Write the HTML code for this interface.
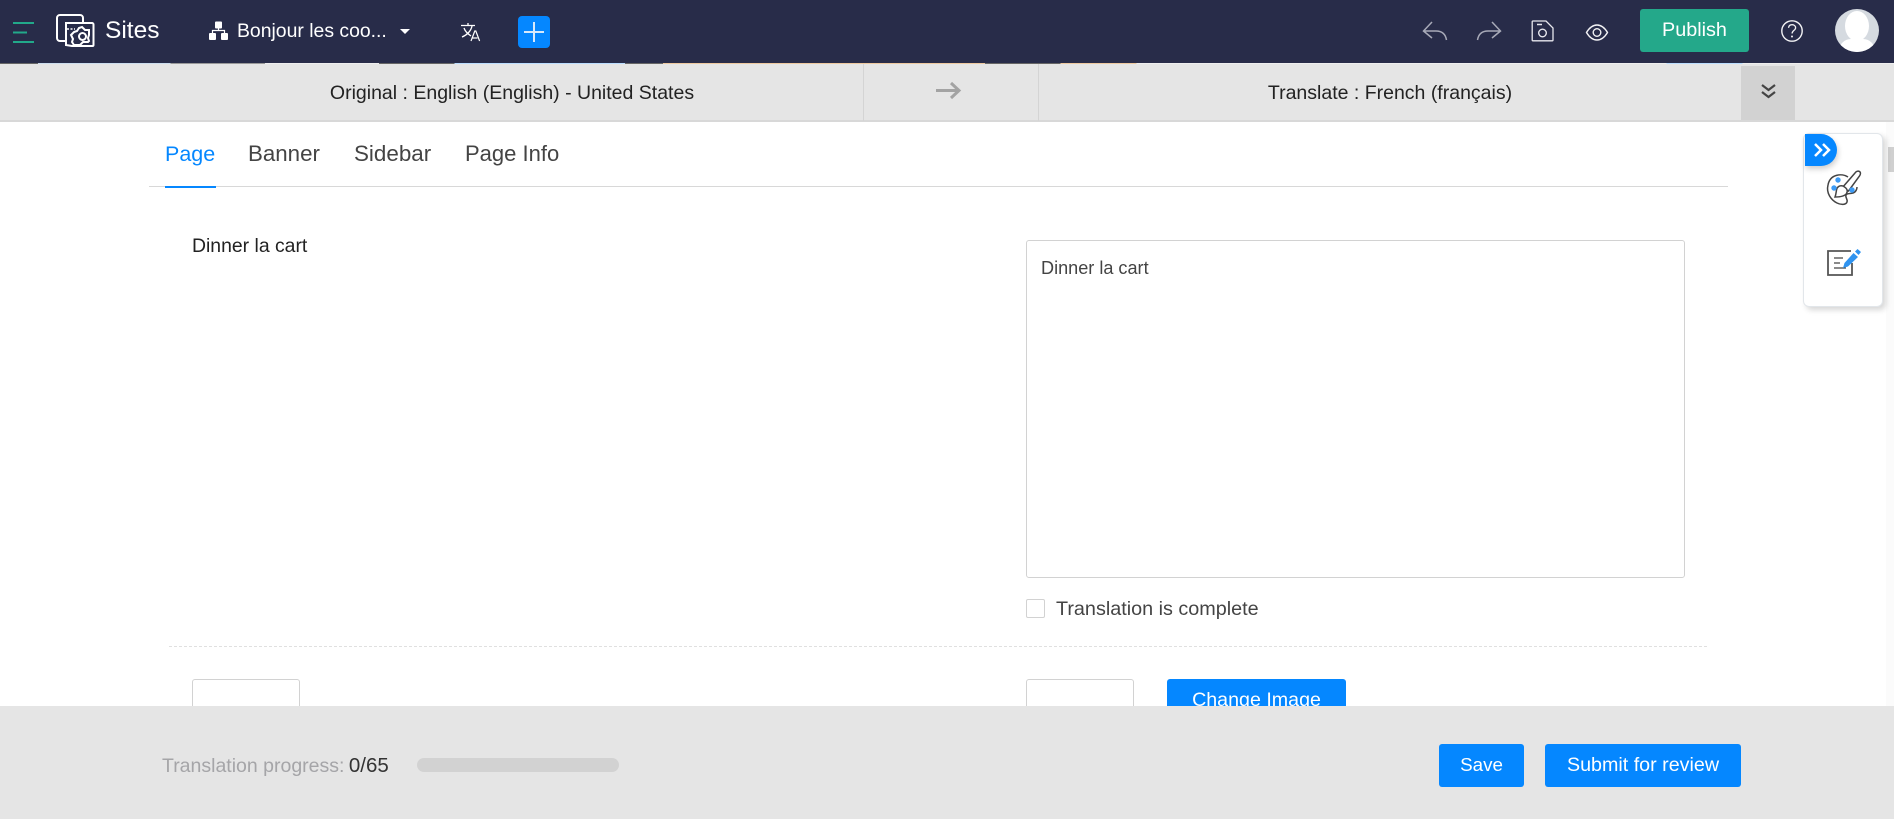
<!DOCTYPE html>
<html><head><meta charset="utf-8"><style>
*{box-sizing:border-box}
html,body{margin:0;padding:0;width:1894px;height:819px;overflow:hidden;background:#fff;font-family:"Liberation Sans",sans-serif}
.a{position:absolute;white-space:nowrap}
svg{position:absolute;overflow:visible}
.btn{position:absolute;background:#0587ff;border-radius:3px;color:#fff;font-size:19.500px;text-align:center}
</style></head><body>
<div class="a" style="left:0;top:0;width:1894px;height:63px;background:#282c49"></div>
<div class="a" style="left:0;top:63px;width:1894px;height:1px;background:linear-gradient(90deg,#666 0 2%,#cde 2% 9%,#999 9% 14%,#eee 14% 20%,#666 20% 24%,#bdf 24% 33%,#666 33% 35%,#eec9a0 35% 52%,#666 52% 56%,#eec9a0 56% 60%,#eee 60% 88%,#bdf 88% 92%,#eee 92%)"></div>
<div class="a" style="left:0;top:64px;width:1894px;height:58px;background:#e5e5e5;border-bottom:2px solid #d8d8d8"></div>

<!-- nav icons -->
<svg style="left:0;top:0" width="600" height="63" fill="none">
<path d="M13 23H34M13 32.500H27M13 42H34" stroke="#22a98a" stroke-width="2"/>
<path d="M65 41H60a3 3 0 0 1-3-3V18a3 3 0 0 1 3-3h20a3 3 0 0 1 3 3v4" stroke="#fff" stroke-width="2"/>
<path d="M66 23H92a1.500 1.500 0 0 1 1.500 1.500V45a1 1 0 0 1-1 1H72l-6-1z" stroke="#fff" stroke-width="2"/>
<path d="M67 29H75" stroke="#fff" stroke-width="1.500" stroke-dasharray="2 1.500"/>
<path d="M82 27l3 3h4v5l-1 3 1 3-1 1h-5l-3 3h-6l-2-3 1-3-2-4 3-3 3-1 2-3z" stroke="#fff" stroke-width="2" fill="#282c49"/>
<circle cx="82.500" cy="36.500" r="3.500" stroke="#fff" stroke-width="2"/>
<g fill="#fff"><rect x="215" y="21.500" width="7" height="7" rx="1"/><rect x="209" y="33" width="7" height="7" rx="1"/><rect x="221" y="33" width="7" height="7" rx="1"/></g>
<path d="M218.500 28v2.500M212.500 33v-2.500h12V33" stroke="#fff" stroke-width="1.200"/>
<path d="M400 29h10l-5 5z" fill="#fff"/>
<path d="M461 25.500H475M468 23v3M472 26c-1 5-5 9-10 11M464 28c1 3 4 6 7 8" stroke="#fff" stroke-width="1.300"/>
<path d="M471 41l3.800-10h1l3.800 10M472.500 38h5" stroke="#fff" stroke-width="1.200"/>
<rect x="518" y="16" width="32" height="32" rx="4" fill="#0587ff"/>
<path d="M534 22V42M524 32H544" stroke="#d7e9fb" stroke-width="2"/>
</svg>
<div class="a" style="left:105px;top:16px;font-size:24.500px;line-height:30px;color:#fff">Sites</div>
<div class="a" style="left:237px;top:18px;font-size:19.400px;line-height:26px;color:#fff">Bonjour les coo...</div>

<svg style="left:1380px;top:0" width="514" height="63" fill="none">
<path d="M52 22l-8.500 9 8.500 7M44 31H56c6 0 9.500 3 10.500 9" stroke="#a8aab8" stroke-width="1.500"/>
<path d="M112 22l8.500 9-8.500 7M120 31H108c-6 0-9.500 3-10.500 9" stroke="#a8aab8" stroke-width="1.500"/>
<path d="M153 21h13l7 7v12a.8.8 0 0 1-.8.8H153a.8.8 0 0 1-.8-.8V22a.8.8 0 0 1 .8-1z" stroke="#e8e8ee" stroke-width="1.300"/>
<path d="M157 24.500h5" stroke="#e8e8ee" stroke-width="1.500"/>
<circle cx="162.500" cy="33" r="3.800" stroke="#e8e8ee" stroke-width="1.400"/>
<path d="M206.500 32.500c3-5 7-7.500 10.500-7.500s7.500 2.500 10.500 7.500c-3 5-7 7.500-10.500 7.500s-7.500-2.500-10.500-7.500z" stroke="#f2f2f4" stroke-width="1.400"/>
<circle cx="217" cy="32.500" r="3.800" stroke="#f2f2f4" stroke-width="1.400"/>
<circle cx="412" cy="31" r="10.200" stroke="#f2f2f4" stroke-width="1.400"/>
<path d="M408.500 27.800c.3-2 1.800-3.100 3.600-3.100 2 0 3.500 1.300 3.500 3 0 2.800-3.500 2.600-3.500 5.800" stroke="#f2f2f4" stroke-width="1.300"/>
<circle cx="412" cy="36.500" r="1" fill="#f2f2f4"/>
</svg>
<div class="a" style="left:1640px;top:9px;width:109px;height:43px;background:#24a88a;border-radius:3px;color:#fff;font-size:19.800px;line-height:43px;text-align:center">Publish</div>
<div class="a" style="left:1835px;top:9px;width:44px;height:43px;border-radius:50%;background:#d5dae0;overflow:hidden">
<div class="a" style="left:10px;top:2px;width:24px;height:30px;border-radius:50%;background:#fff"></div>
<div class="a" style="left:4px;top:30px;width:36px;height:16px;border-radius:12px 12px 0 0;background:#fff"></div>
</div>

<!-- band -->
<div class="a" style="left:863px;top:64px;width:1px;height:57px;background:#d4d4d4"></div>
<div class="a" style="left:1038px;top:64px;width:1px;height:57px;background:#d4d4d4"></div>
<div class="a" style="left:0;top:79px;width:863px;text-align:center;padding-left:161px;font-size:19.500px;line-height:28px;color:#222"><span>Original : English (English) - United States</span></div>
<div class="a" style="left:1039px;top:79px;width:702px;text-align:center;font-size:19.500px;line-height:28px;color:#222">Translate : French (français)</div>
<svg style="left:0;top:0" width="1894" height="130" fill="none">
<path d="M936 90.500H959M951 83l8 7.500-8 7.500" stroke="#a3a3a3" stroke-width="3"/>
</svg>
<div class="a" style="left:1741px;top:66px;width:54px;height:54px;background:#d2d2d2"></div>
<svg style="left:0;top:0" width="1894" height="130" fill="none">
<path d="M1762 85l6.500 5 6.500-5M1762 92l6.500 5 6.500-5" stroke="#444" stroke-width="2.200"/>
</svg>

<!-- tabs -->
<div class="a" style="left:165px;top:140px;font-size:21.500px;line-height:28px;color:#0587ff">Page</div>
<div class="a" style="left:248px;top:140px;font-size:22.300px;line-height:28px;color:#444">Banner</div>
<div class="a" style="left:354px;top:140px;font-size:22.400px;line-height:28px;color:#444">Sidebar</div>
<div class="a" style="left:465px;top:140px;font-size:22px;line-height:28px;color:#444">Page Info</div>
<div class="a" style="left:149px;top:186px;width:1579px;height:1px;background:#d8d8d8"></div>
<div class="a" style="left:165px;top:186px;width:51px;height:2px;background:#0587ff"></div>

<!-- content -->
<div class="a" style="left:192px;top:233px;font-size:19.400px;line-height:26px;color:#222">Dinner la cart</div>
<div class="a" style="left:1026px;top:240px;width:659px;height:338px;border:1px solid #d2d2d2;border-radius:3px"></div>
<div class="a" style="left:1041px;top:256px;font-size:18.100px;line-height:24px;color:#444">Dinner la cart</div>
<div class="a" style="left:1026px;top:599px;width:19px;height:19px;border:1px solid #d2d2d2;border-radius:2px"></div>
<div class="a" style="left:1056px;top:596px;font-size:19.800px;line-height:26px;color:#444">Translation is complete</div>
<div class="a" style="left:169px;top:646px;width:1538px;height:0;border-top:1px dashed #e0e0e0"></div>
<div class="a" style="left:192px;top:679px;width:108px;height:40px;border:1px solid #d2d2d2;border-radius:3px"></div>
<div class="a" style="left:1026px;top:679px;width:108px;height:40px;border:1px solid #d2d2d2;border-radius:3px"></div>
<div class="btn" style="left:1167px;top:679px;width:179px;height:40px;line-height:43px;font-size:19.650px">Change Image</div>

<!-- scrollbar -->
<div class="a" style="left:1886px;top:122px;width:8px;height:584px;background:#fbfbfb"></div>
<div class="a" style="left:1888px;top:147px;width:6px;height:25px;background:#d0d0d0"></div>

<!-- side panel -->
<div class="a" style="left:1803px;top:133px;width:80px;height:174px;background:#fff;border:1px solid #e2e6ea;border-radius:6px;box-shadow:3px 3px 6px rgba(0,0,0,.16)"></div>
<div class="a" style="left:1805px;top:134px;width:32px;height:32px;background:#0587ff;border-radius:0 16px 16px 0;box-shadow:1px 3px 6px rgba(0,0,0,.2)"></div>
<svg style="left:0;top:0" width="1894" height="320" fill="none">
<path d="M1815 144l6 6-6 6M1823 144l6 6-6 6" stroke="#fff" stroke-width="2.500"/>
<path d="M1848 177c-6-4-18-3-20 8-2 8 3 15 9 18 4 2 9 2 10-1 1-3-2-4-1-7 1-2 5-1 7-2 3-1 4-4 4-6" stroke="#444" stroke-width="1.500"/>
<path d="M1842 188l13-15c1-1.500 3-2.500 4.500-1.500 1.500 1 1 3 0 4.500l-11 15z" stroke="#444" stroke-width="1.500" fill="#fff"/>
<path d="M1843 186c-3.500-1-6 1-6.500 4-.4 2.500-.5 4.500-1.500 7 4.500 0 9.500-.5 11.500-3.500 1.500-2.500 1-5-3.500-7.500z" stroke="#444" stroke-width="1.500" fill="#fff"/>
<circle cx="1838" cy="180" r="2.700" fill="#3d9bf5"/><circle cx="1834" cy="188" r="2.700" fill="#3d9bf5"/><circle cx="1852" cy="190" r="2.700" fill="#3d9bf5"/>
<path d="M1851 251H1828V275H1852V263" stroke="#555" stroke-width="1.800"/>
<path d="M1834 258h9M1834 263h6M1834 268h12" stroke="#444" stroke-width="1.300"/>
<path d="M1843 268l1.500-5 9-10 4.500 4-10 9.500z" fill="#2f93ef"/>
<path d="M1855 251.500l2.500-2.500 3.500 3-2.500 3z" fill="#2f93ef"/>
</svg>

<!-- footer -->
<div class="a" style="left:0;top:706px;width:1894px;height:113px;background:#e5e5e5"></div>
<div class="a" style="left:162px;top:753px;font-size:19.500px;line-height:26px;color:#a5a5a8">Translation progress: <span style="color:#333;font-size:20.500px;margin-left:-1px">0/65</span></div>
<div class="a" style="left:417px;top:758px;width:202px;height:14px;border-radius:7px;background:#d2d2d2"></div>
<div class="btn" style="left:1439px;top:744px;width:85px;height:43px;line-height:42px;font-size:18.800px">Save</div>
<div class="btn" style="left:1545px;top:744px;width:196px;height:43px;line-height:43px;font-size:19.700px">Submit for review</div>
</body></html>
